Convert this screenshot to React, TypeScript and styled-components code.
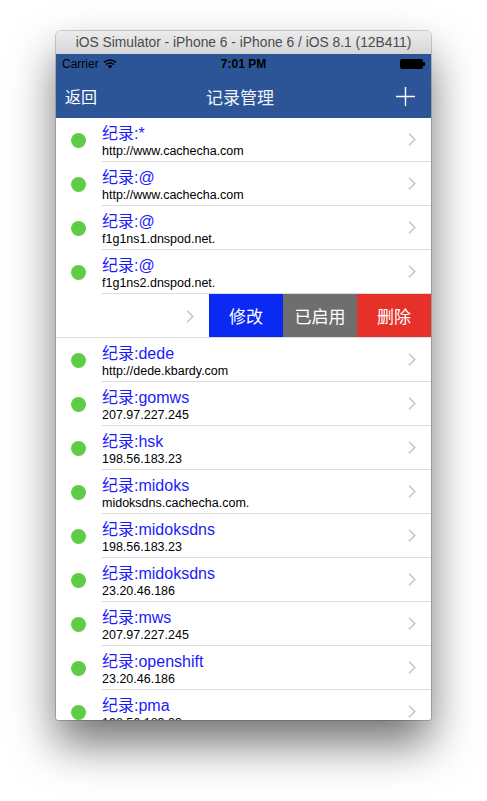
import React from 'react';
import styled, { createGlobalStyle } from 'styled-components';

const GlobalStyle = createGlobalStyle`
  html, body {
    margin: 0;
    padding: 0;
    background: #ffffff;
  }
  body {
    font-family: "Liberation Sans", "Noto Sans CJK SC", sans-serif;
  }
`;

const NAV_BLUE = '#2c5597';

const Page = styled.div`
  width: 487px;
  height: 801px;
  box-sizing: border-box;
  padding: 31px 0 0 56px;
  overflow: hidden;
  background: #ffffff;
`;

const Window = styled.div`
  width: 375px;
  height: 689px;
  display: flex;
  flex-direction: column;
  border-radius: 5px 5px 3px 3px;
  overflow: hidden;
  background: #ffffff;
  box-shadow: 0 24px 45px 0 rgba(0, 0, 0, 0.55), 0 0 0 1px rgba(0, 0, 0, 0.18);
`;

const TitleBar = styled.div`
  flex: none;
  height: 23px;
  display: flex;
  align-items: center;
  justify-content: center;
  background: linear-gradient(#ececec, #d6d6d6);
  color: #4b4b4b;
  font-size: 13.8px;
  white-space: nowrap;
`;

const StatusBar = styled.div`
  flex: none;
  height: 20px;
  background: ${NAV_BLUE};
  display: grid;
  grid-template-columns: 1fr auto 1fr;
  align-items: center;
  padding: 0 6px;
  color: #000000;
  font-size: 12px;
`;

const Carrier = styled.div`
  display: flex;
  align-items: center;
  gap: 4px;
`;

const Time = styled.div`
  font-weight: bold;
`;

const BatteryWrap = styled.div`
  display: flex;
  justify-content: flex-end;
`;

const NavBar = styled.div`
  flex: none;
  height: 44px;
  background: ${NAV_BLUE};
  display: grid;
  grid-template-columns: 1fr auto 1fr;
  align-items: center;
  padding: 0 16px 0 9px;
  color: #ffffff;
`;

const NavBack = styled.div`
  font-size: 16px;
  justify-self: start;
`;

const NavTitle = styled.div`
  font-size: 17px;
  color: #eef1f7;
`;

const NavAdd = styled.div`
  justify-self: end;
  display: flex;
`;

const List = styled.div`
  flex: 1;
  overflow: hidden;
`;

const Cell = styled.div`
  display: flex;
  height: 44px;
  flex: 0 0 375px;
  width: 375px;
  background: #ffffff;
`;

const DotCol = styled.div`
  flex: 0 0 46px;
  display: flex;
  align-items: center;
  padding-left: 15px;
  box-sizing: border-box;
`;

const Dot = styled.div`
  width: 15px;
  height: 15px;
  border-radius: 50%;
  background: #5fcc45;
`;

const Body = styled.div<{ $separator: boolean }>`
  flex: 1;
  display: flex;
  align-items: center;
  box-sizing: border-box;
  padding-right: 15px;
  border-bottom: ${(p) => (p.$separator ? '1px solid #dcdcdf' : 'none')};
`;

const TextBlock = styled.div`
  flex: 1;
  align-self: stretch;
  padding-top: 6px;
  box-sizing: border-box;
  white-space: nowrap;
`;

const Label = styled.div`
  font-size: 16px;
  line-height: 19px;
  height: 20px;
  color: #1b1bfa;
`;

const Sub = styled.div`
  font-size: 12.5px;
  line-height: 14px;
  height: 14px;
  color: #000000;
`;

const SwipeRow = styled.div`
  display: flex;
  height: 44px;
  box-sizing: border-box;
  border-bottom: 1px solid #dcdcdf;
  overflow: hidden;
`;

const SwipedCell = styled.div`
  flex: 0 0 375px;
  margin-left: -222px;
  display: flex;
`;

const Actions = styled.div`
  flex: 0 0 222px;
  display: flex;
`;

const ActionButton = styled.div<{ $bg: string }>`
  flex: 0 0 74px;
  display: flex;
  align-items: center;
  justify-content: center;
  background: ${(p) => p.$bg};
  color: #ffffff;
  font-size: 17px;
`;

const Chevron = () => (
  <svg width="8" height="13" viewBox="0 0 8 13" fill="none">
    <path d="M1 0.8 L6.8 6.5 L1 12.2" stroke="#c7c7cc" strokeWidth="1.6" />
  </svg>
);

const Wifi = () => (
  <svg width="14" height="10" viewBox="0 0 14 10">
    <path d="M7 9.6 L9.3 7.2 A3.3 3.3 0 0 0 4.7 7.2 Z" fill="#000" />
    <path d="M3.2 5.6 A5.4 5.4 0 0 1 10.8 5.6" stroke="#000" strokeWidth="1.5" fill="none" />
    <path d="M1 3.4 A8.5 8.5 0 0 1 13 3.4" stroke="#000" strokeWidth="1.5" fill="none" />
  </svg>
);

const Battery = () => (
  <svg width="25" height="10" viewBox="0 0 25 10">
    <rect x="0.5" y="0.5" width="22" height="9" rx="1.5" fill="#000" stroke="#000" />
    <rect x="23" y="3" width="2" height="4" rx="0.5" fill="#000" />
  </svg>
);

const Plus = () => (
  <svg width="19" height="19" viewBox="0 0 19 19">
    <path d="M9.5 0 V19 M0 9.5 H19" stroke="#ffffff" strokeWidth="1.4" />
  </svg>
);

type Rec = { name: string; value: string };

const before: Rec[] = [
  { name: '*', value: 'http://www.cachecha.com' },
  { name: '@', value: 'http://www.cachecha.com' },
  { name: '@', value: 'f1g1ns1.dnspod.net.' },
  { name: '@', value: 'f1g1ns2.dnspod.net.' },
];

const after: Rec[] = [
  { name: 'dede', value: 'http://dede.kbardy.com' },
  { name: 'gomws', value: '207.97.227.245' },
  { name: 'hsk', value: '198.56.183.23' },
  { name: 'midoks', value: 'midoksdns.cachecha.com.' },
  { name: 'midoksdns', value: '198.56.183.23' },
  { name: 'midoksdns', value: '23.20.46.186' },
  { name: 'mws', value: '207.97.227.245' },
  { name: 'openshift', value: '23.20.46.186' },
  { name: 'pma', value: '198.56.183.23' },
];

const RecordCell = ({ rec, separator }: { rec?: Rec; separator: boolean }) => (
  <Cell>
    <DotCol>
      <Dot />
    </DotCol>
    <Body $separator={separator}>
      <TextBlock>
        {rec && (
          <>
            <Label>纪录:{rec.name}</Label>
            <Sub>{rec.value}</Sub>
          </>
        )}
      </TextBlock>
      <Chevron />
    </Body>
  </Cell>
);

export default function App() {
  return (
    <>
      <GlobalStyle />
      <Page>
        <Window>
          <TitleBar>iOS Simulator - iPhone 6 - iPhone 6 / iOS 8.1 (12B411)</TitleBar>
          <StatusBar>
            <Carrier>
              Carrier <Wifi />
            </Carrier>
            <Time>7:01 PM</Time>
            <BatteryWrap>
              <Battery />
            </BatteryWrap>
          </StatusBar>
          <NavBar>
            <NavBack>返回</NavBack>
            <NavTitle>记录管理</NavTitle>
            <NavAdd>
              <Plus />
            </NavAdd>
          </NavBar>
          <List>
            {before.map((r, i) => (
              <RecordCell key={'b' + i} rec={r} separator />
            ))}
            <SwipeRow>
              <SwipedCell>
                <RecordCell separator={false} />
              </SwipedCell>
              <Actions>
                <ActionButton $bg="#0a2af4">修改</ActionButton>
                <ActionButton $bg="#6e6e6e">已启用</ActionButton>
                <ActionButton $bg="#e5312a">删除</ActionButton>
              </Actions>
            </SwipeRow>
            {after.map((r, i) => (
              <RecordCell key={'a' + i} rec={r} separator />
            ))}
          </List>
        </Window>
      </Page>
    </>
  );
}
